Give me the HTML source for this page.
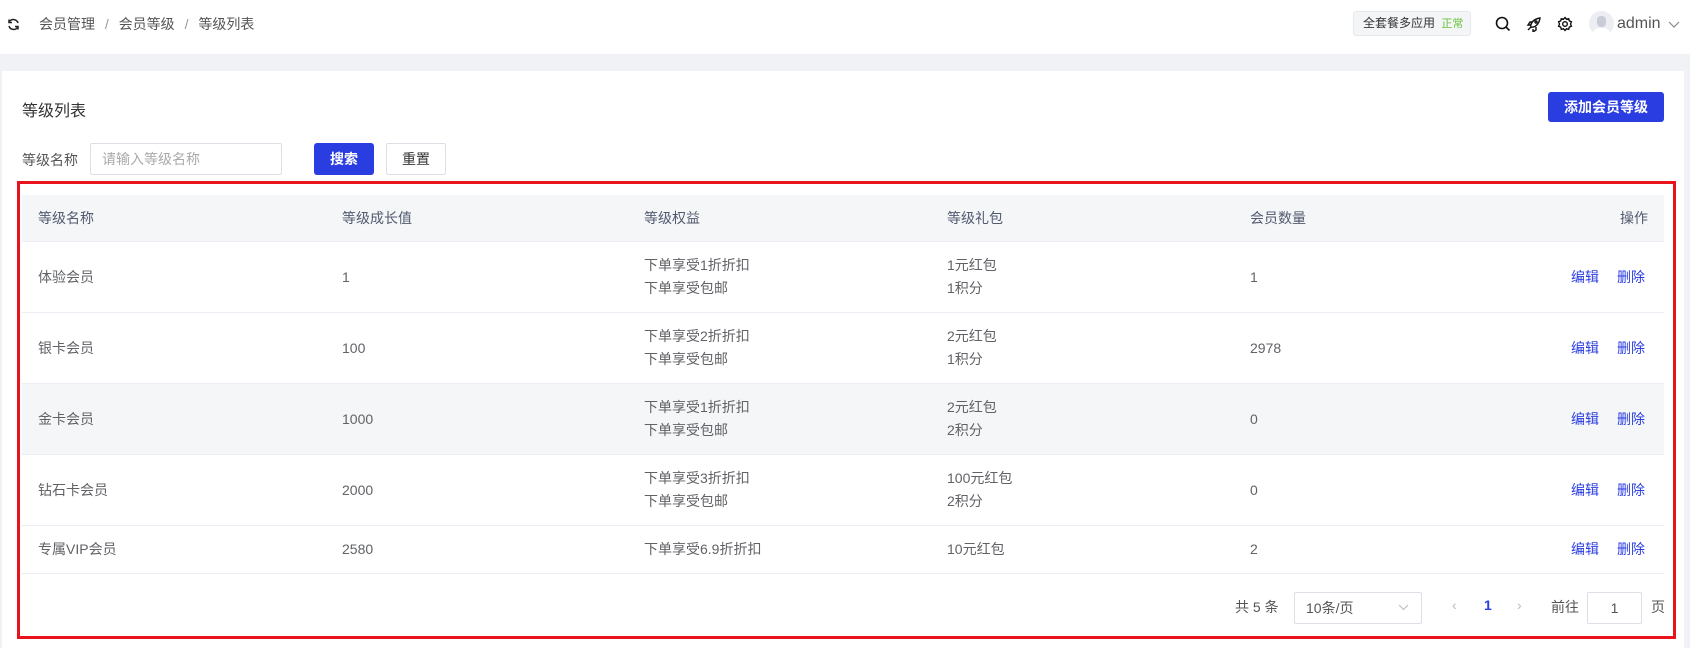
<!DOCTYPE html>
<html><head><meta charset="utf-8"><style>
*{box-sizing:border-box;margin:0;padding:0}
body{width:1690px;height:648px;overflow:hidden;background:#f0f2f5;font-family:"Liberation Sans","Noto Sans CJK SC",sans-serif;font-size:14px;color:#606266;position:relative}
.abs{position:absolute}
.hdr{left:0;top:0;width:1690px;height:54px;background:#fff}
.card{left:2px;top:71px;width:1682px;height:577px;background:#fff}
.btn{position:absolute;background:#2a3de0;color:#fff;font-weight:bold;border-radius:3px;text-align:center}
.tbl{left:22px;top:195px;width:1642px}
.row{position:absolute;left:0;width:1642px;border-bottom:1px solid #ebeef5}
.c{position:absolute;line-height:23px}
.op{position:absolute;right:19px;color:#2a3de0}
.op span{margin-left:18px}
</style></head><body>
<div class="abs hdr"></div>
<svg class="abs" style="left:7px;top:18px" width="13" height="13" viewBox="0 0 13 13" fill="none" stroke="#222" stroke-width="1.5"><path d="M11 5A4.8 4.8 0 0 0 2.2 4M2 8a4.8 4.8 0 0 0 8.8 1"/><path d="M2 1.5V4.5H5M11 11.5V8.5H8"/></svg>
<div class="abs" style="left:39px;top:15px;font-size:14px;color:#555;line-height:18px">会员管理 <span style="color:#999;margin:0 6px">/</span> 会员等级 <span style="color:#999;margin:0 6px">/</span> 等级列表</div>
<div class="abs" style="left:1353px;top:11px;width:118px;height:25px;background:#f4f5f7;border:1px solid #e6e8eb;border-radius:3px;font-size:12px;color:#333;line-height:23px;padding-left:9px">全套餐多应用 <span style="color:#67c23a;font-size:11px;margin-left:3px">正常</span></div>
<svg class="abs" style="left:1495px;top:16px" width="16" height="16" viewBox="0 0 16 16" fill="none" stroke="#111" stroke-width="1.6"><circle cx="7" cy="7" r="5.5"/><path d="M11 11l3.5 3.5"/></svg>
<svg class="abs" style="left:1526px;top:16px" width="16" height="16" viewBox="0 0 16 16" fill="none" stroke="#111" stroke-width="1.4"><path d="M5 11C4 8 7 3 14 2c-1 7-6 10-9 9zM5 11l-3 3M7 6H4L2 9h3M10 11v3l-3 2v-3"/><circle cx="10" cy="6" r="1"/></svg>
<svg class="abs" style="left:1557px;top:16px" width="16" height="16" viewBox="0 0 16 16" fill="none" stroke="#111" stroke-width="1.4"><circle cx="8" cy="8" r="2.3"/><path d="M8 1.5l1.5 1.7 2.2-.5.6 2.2 2.1.9-.9 2.2.9 2.2-2.1.9-.6 2.2-2.2-.5L8 14.5l-1.5-1.7-2.2.5-.6-2.2-2.1-.9.9-2.2-.9-2.2 2.1-.9.6-2.2 2.2.5z"/></svg>
<div class="abs" style="left:1589px;top:11px;width:25px;height:25px;border-radius:50%;background:#eceef3;overflow:hidden"><div style="position:absolute;left:8px;top:5px;width:9px;height:11px;border-radius:4px;background:#c9ccd6"></div><div style="position:absolute;left:4px;top:17px;width:17px;height:12px;border-radius:8px;background:#fff"></div></div>
<div class="abs" style="left:1617px;top:15px;font-size:16px;color:#555">admin</div>
<svg class="abs" style="left:1668px;top:21px" width="12" height="8" viewBox="0 0 12 8" fill="none" stroke="#888" stroke-width="1.2"><path d="M1 1l5 5 5-5"/></svg>

<div class="abs card"></div>
<div class="abs" style="left:22px;top:97px;font-size:16px;color:#333">等级列表</div>
<div class="btn" style="left:1548px;top:92px;width:116px;height:30px;line-height:30px;font-size:14px">添加会员等级</div>
<div class="abs" style="left:22px;top:150px;color:#555">等级名称</div>
<div class="abs" style="left:90px;top:143px;width:192px;height:32px;border:1px solid #dcdfe6;border-radius:2px;color:#aaa;line-height:30px;padding-left:11px">请输入等级名称</div>
<div class="btn" style="left:314px;top:143px;width:60px;height:32px;line-height:32px">搜索</div>
<div class="abs" style="left:386px;top:143px;width:60px;height:32px;border:1px solid #dcdfe6;border-radius:2px;text-align:center;line-height:30px;color:#333">重置</div>

<div class="abs" style="left:17px;top:181px;width:1659px;height:458px;border:3px solid #e8131c"></div>

<div class="abs tbl">
 <div class="row" style="top:0;height:47px;background:#f5f6f8;color:#515a6e">
  <div class="c" style="left:16px;top:12px">等级名称</div><div class="c" style="left:320px;top:12px">等级成长值</div><div class="c" style="left:622px;top:12px">等级权益</div><div class="c" style="left:925px;top:12px">等级礼包</div><div class="c" style="left:1228px;top:12px">会员数量</div><div class="c" style="right:16px;top:12px">操作</div>
 </div>
 <div class="row" style="top:47px;height:71px">
  <div class="c" style="left:16px;top:24px">体验会员</div><div class="c" style="left:320px;top:24px">1</div><div class="c" style="left:622px;top:12px">下单享受1折折扣<br>下单享受包邮</div><div class="c" style="left:925px;top:12px">1元红包<br>1积分</div><div class="c" style="left:1228px;top:24px">1</div><div class="op c" style="top:24px"><span>编辑</span><span>删除</span></div>
 </div>
 <div class="row" style="top:118px;height:71px">
  <div class="c" style="left:16px;top:24px">银卡会员</div><div class="c" style="left:320px;top:24px">100</div><div class="c" style="left:622px;top:12px">下单享受2折折扣<br>下单享受包邮</div><div class="c" style="left:925px;top:12px">2元红包<br>1积分</div><div class="c" style="left:1228px;top:24px">2978</div><div class="op c" style="top:24px"><span>编辑</span><span>删除</span></div>
 </div>
 <div class="row" style="top:189px;height:71px;background:#f5f6f8">
  <div class="c" style="left:16px;top:24px">金卡会员</div><div class="c" style="left:320px;top:24px">1000</div><div class="c" style="left:622px;top:12px">下单享受1折折扣<br>下单享受包邮</div><div class="c" style="left:925px;top:12px">2元红包<br>2积分</div><div class="c" style="left:1228px;top:24px">0</div><div class="op c" style="top:24px"><span>编辑</span><span>删除</span></div>
 </div>
 <div class="row" style="top:260px;height:71px">
  <div class="c" style="left:16px;top:24px">钻石卡会员</div><div class="c" style="left:320px;top:24px">2000</div><div class="c" style="left:622px;top:12px">下单享受3折折扣<br>下单享受包邮</div><div class="c" style="left:925px;top:12px">100元红包<br>2积分</div><div class="c" style="left:1228px;top:24px">0</div><div class="op c" style="top:24px"><span>编辑</span><span>删除</span></div>
 </div>
 <div class="row" style="top:331px;height:48px">
  <div class="c" style="left:16px;top:12px">专属VIP会员</div><div class="c" style="left:320px;top:12px">2580</div><div class="c" style="left:622px;top:12px">下单享受6.9折折扣</div><div class="c" style="left:925px;top:12px">10元红包</div><div class="c" style="left:1228px;top:12px">2</div><div class="op c" style="top:12px"><span>编辑</span><span>删除</span></div>
 </div>
</div>

<div class="abs" style="left:1235px;top:597px;color:#555">共 5 条</div>
<div class="abs" style="left:1294px;top:592px;width:128px;height:32px;border:1px solid #dcdfe6;border-radius:2px;line-height:30px;padding-left:11px;color:#555">10条/页</div>
<svg class="abs" style="left:1398px;top:604px" width="11" height="7" viewBox="0 0 11 7" fill="none" stroke="#bbb" stroke-width="1"><path d="M1 1l4.5 4.5L10 1"/></svg>
<div class="abs" style="left:1452px;top:597px;color:#bbb">‹</div>
<div class="abs" style="left:1484px;top:597px;color:#2a3de0;font-weight:bold">1</div>
<div class="abs" style="left:1517px;top:597px;color:#bbb">›</div>
<div class="abs" style="left:1551px;top:597px;color:#555">前往</div>
<div class="abs" style="left:1587px;top:592px;width:55px;height:32px;border:1px solid #dcdfe6;border-radius:2px;text-align:center;line-height:30px;color:#555">1</div>
<div class="abs" style="left:1651px;top:597px;color:#555">页</div>
</body></html>
